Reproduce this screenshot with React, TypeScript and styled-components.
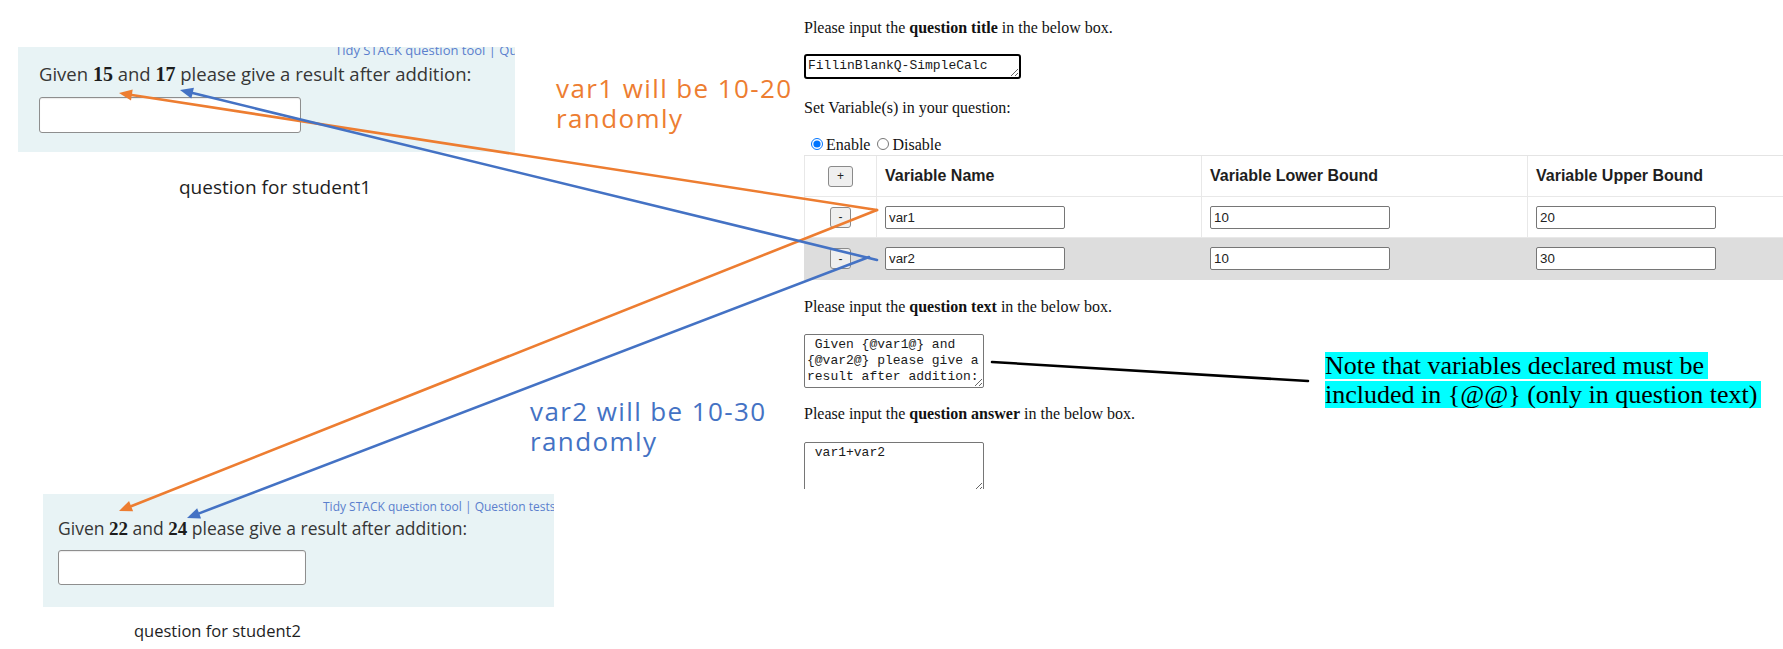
import React from 'react';
import styled, { createGlobalStyle } from 'styled-components';

const GlobalStyle = createGlobalStyle`
  html, body {
    margin: 0;
    padding: 0;
    background: #ffffff;
  }
  body {
    font-family: "Liberation Serif", "Times New Roman", serif;
  }
`;

const ORANGE = '#ed7d31';
const BLUE = '#4472c4';

/* ---------- canvas ---------- */

const Canvas = styled.div`
  position: relative;
  width: 1783px;
  height: 649px;
  overflow: hidden;
  background: #ffffff;
`;

const Overlay = styled.svg`
  position: absolute;
  left: 0;
  top: 0;
  width: 1783px;
  height: 649px;
  pointer-events: none;
`;

/* ---------- student question screenshots ---------- */

const Figure = styled.figure<{ $left: number; $top: number }>`
  position: absolute;
  left: ${(p) => p.$left}px;
  top: ${(p) => p.$top}px;
  margin: 0;
  display: flex;
  flex-direction: column;
  font-family: "Open Sans", "Noto Sans", sans-serif;
`;

const QuestionPanel = styled.div<{ $w: number; $h: number; $pad: number }>`
  box-sizing: border-box;
  width: ${(p) => p.$w}px;
  height: ${(p) => p.$h}px;
  padding-left: ${(p) => p.$pad}px;
  background: #e8f3f5;
  overflow: hidden;
  display: flex;
  flex-direction: column;
  align-items: flex-start;
`;

const ToolLinks = styled.div<{ $indent: number; $size: number; $shift: number }>`
  margin-top: ${(p) => p.$shift}px;
  padding-left: ${(p) => p.$indent}px;
  white-space: nowrap;
  font-size: ${(p) => p.$size}px;
  line-height: ${(p) => p.$size + 3}px;
  color: #5b7fcd;
`;

const Prompt = styled.div<{ $size: number; $gap: number }>`
  margin-top: ${(p) => p.$gap}px;
  font-size: ${(p) => p.$size}px;
  line-height: ${(p) => Math.round(p.$size + 6)}px;
  color: #363636;
  white-space: nowrap;
`;

const MathNum = styled.span<{ $size: number }>`
  font-family: "Liberation Serif", "DejaVu Serif", serif;
  font-size: ${(p) => p.$size}px;
  line-height: 1;
  color: #1c1c1c;
  font-weight: 600;
`;

const AnswerField = styled.div<{ $w: number; $h: number; $gap: number }>`
  box-sizing: border-box;
  margin-top: ${(p) => p.$gap}px;
  width: ${(p) => p.$w}px;
  height: ${(p) => p.$h}px;
  background: #ffffff;
  border: 1px solid #8e8e8e;
  border-radius: 3px;
  box-shadow: inset 0 1px 1px rgba(0, 0, 0, 0.08);
`;

const Caption = styled.figcaption<{ $indent: number; $gap: number; $size: number }>`
  margin-top: ${(p) => p.$gap}px;
  padding-left: ${(p) => p.$indent}px;
  font-size: ${(p) => p.$size}px;
  line-height: ${(p) => Math.round(p.$size + 5)}px;
  color: #1e1e1e;
`;

/* ---------- annotation callouts ---------- */

const Callout = styled.div<{ $left: number; $top: number; $color: string }>`
  position: absolute;
  left: ${(p) => p.$left}px;
  top: ${(p) => p.$top}px;
  font-family: "Open Sans", "Noto Sans", sans-serif;
  font-size: 26px;
  line-height: 30px;
  letter-spacing: 1.4px;
  color: ${(p) => p.$color};
  white-space: nowrap;
`;

const Note = styled.div`
  position: absolute;
  left: 1325px;
  top: 352px;
  display: flex;
  flex-direction: column;
  gap: 2px;
  font-family: "Liberation Serif", "Times New Roman", serif;
  font-size: 26px;
  color: #000000;
`;

const NoteLine = styled.span`
  width: fit-content;
  height: 27px;
  line-height: 27px;
  padding-right: 4px;
  background: #00ffff;
  white-space: nowrap;
`;

/* ---------- question authoring form screenshot ---------- */

const FormShot = styled.section`
  position: absolute;
  left: 804px;
  top: 0;
  width: 979px;
  height: 489px;
  overflow: hidden;
  display: flex;
  flex-direction: column;
  align-items: flex-start;
  font-family: "Liberation Serif", "Times New Roman", serif;
  font-size: 16px;
  color: #111111;
`;

const Para = styled.p<{ $gap: number }>`
  margin: ${(p) => p.$gap}px 0 0;
  line-height: 18px;
  white-space: nowrap;
`;

const CodeBox = styled.textarea<{ $w: number; $h: number; $gap: number; $focused?: boolean }>`
  box-sizing: border-box;
  flex: none;
  margin: ${(p) => p.$gap}px 0 0;
  width: ${(p) => p.$w}px;
  height: ${(p) => p.$h}px;
  padding: 2px;
  border: ${(p) => (p.$focused ? '2px solid #000000' : '1px solid #767676')};
  border-radius: ${(p) => (p.$focused ? 3 : 2)}px;
  font-family: "Liberation Mono", "DejaVu Sans Mono", monospace;
  font-size: 13px;
  line-height: 16px;
  color: #1a1a1a;
  background: #ffffff;
  overflow: hidden;
  resize: both;
  outline: none;
`;

const RadioRow = styled.div`
  margin-top: 18px;
  line-height: 18px;
  white-space: nowrap;
`;

const Radio = styled.input`
  margin: 3px 3px 0 7px;
  width: 12px;
  height: 12px;
`;

const VarTable = styled.div`
  margin-top: 1px;
  width: 1049px;
  border-top: 1px solid #e4e4e4;
  display: flex;
  flex-direction: column;
`;

const VarRow = styled.div<{ $shaded?: boolean; $h: number }>`
  box-sizing: border-box;
  display: grid;
  grid-template-columns: 72px 325px 326px 326px;
  height: ${(p) => p.$h}px;
  background: ${(p) => (p.$shaded ? '#dddddd' : '#ffffff')};
  border-bottom: 1px solid ${(p) => (p.$shaded ? '#dddddd' : '#e8e8e8')};
  border-left: 1px solid ${(p) => (p.$shaded ? '#dddddd' : '#e8e8e8')};
`;

const VarCell = styled.div<{ $center?: boolean; $shaded?: boolean }>`
  box-sizing: border-box;
  display: flex;
  align-items: center;
  justify-content: ${(p) => (p.$center ? 'center' : 'flex-start')};
  padding-left: ${(p) => (p.$center ? 0 : 8)}px;
  border-right: 1px solid ${(p) => (p.$shaded ? '#dddddd' : '#e8e8e8')};
`;

const HeadText = styled.span`
  font-family: "Liberation Sans", Arial, sans-serif;
  font-weight: 700;
  font-size: 16px;
  color: #1e1e1e;
`;

const RowButton = styled.button<{ $w: number }>`
  box-sizing: border-box;
  width: ${(p) => p.$w}px;
  height: 21px;
  padding: 0;
  background: #efefef;
  border: 1px solid #8a8a8a;
  border-radius: 3px;
  font-family: "Liberation Sans", Arial, sans-serif;
  font-size: 12px;
  color: #222222;
`;

const VarInput = styled.input`
  box-sizing: border-box;
  width: 180px;
  height: 23px;
  padding: 1px 3px;
  border: 1px solid #767676;
  border-radius: 2px;
  background: #ffffff;
  font-family: "Liberation Sans", Arial, sans-serif;
  font-size: 13.3px;
  color: #222222;
  outline: none;
`;

/* ---------- arrows ---------- */

type Pt = [number, number];

const Arrow: React.FC<{ from: Pt; to: Pt; color: string; head?: boolean }> = ({
  from,
  to,
  color,
  head = true,
}) => {
  const [x1, y1] = from;
  const [x2, y2] = to;
  const a = Math.atan2(y2 - y1, x2 - x1);
  const len = head ? 13 : 0;
  const half = 5.5;
  const bx = x2 - len * Math.cos(a);
  const by = y2 - len * Math.sin(a);
  const nx = -Math.sin(a) * half;
  const ny = Math.cos(a) * half;
  return (
    <g>
      <line x1={x1} y1={y1} x2={bx} y2={by} stroke={color} strokeWidth={2.6} strokeLinecap="round" />
      {head && (
        <polygon
          points={`${x2},${y2} ${bx + nx},${by + ny} ${bx - nx},${by - ny}`}
          fill={color}
        />
      )}
    </g>
  );
};

const variables = [
  { name: 'var1', lower: '10', upper: '20' },
  { name: 'var2', lower: '10', upper: '30' },
];

export default function App() {
  return (
    <>
      <GlobalStyle />
      <Canvas>
        <Figure $left={18} $top={47}>
          <QuestionPanel $w={497} $h={105} $pad={21}>
            <ToolLinks $indent={296} $size={13} $shift={-5}>
              Tidy STACK question tool | Question tests
            </ToolLinks>
            <Prompt $size={18.5} $gap={3}>
              Given <MathNum $size={20}>15</MathNum> and <MathNum $size={20}>17</MathNum> please give a
              result after addition:
            </Prompt>
            <AnswerField $w={262} $h={36} $gap={11} />
          </QuestionPanel>
          <Caption $indent={161} $gap={23} $size={19}>
            question for student1
          </Caption>
        </Figure>

        <Figure $left={43} $top={494}>
          <QuestionPanel $w={511} $h={113} $pad={15}>
            <ToolLinks $indent={265} $size={12} $shift={5}>
              Tidy STACK question tool | Question tests
            </ToolLinks>
            <Prompt $size={17.5} $gap={2}>
              Given <MathNum $size={19}>22</MathNum> and <MathNum $size={19}>24</MathNum> please give a
              result after addition:
            </Prompt>
            <AnswerField $w={248} $h={35} $gap={10} />
          </QuestionPanel>
          <Caption $indent={91} $gap={13} $size={16.5}>
            question for student2
          </Caption>
        </Figure>

        <Callout $left={556} $top={73} $color={ORANGE}>
          var1 will be 10-20
          <br />
          randomly
        </Callout>
        <Callout $left={530} $top={396} $color={BLUE}>
          var2 will be 10-30
          <br />
          randomly
        </Callout>

        <FormShot>
          <Para $gap={19}>
            Please input the <b>question title</b> in the below box.
          </Para>
          <CodeBox $w={217} $h={25} $gap={17} $focused readOnly defaultValue="FillinBlankQ-SimpleCalc" />
          <Para $gap={20}>Set Variable(s) in your question:</Para>
          <RadioRow>
            <Radio type="radio" name="vars" defaultChecked />
            Enable
            <Radio type="radio" name="vars" />
            Disable
          </RadioRow>
          <VarTable>
            <VarRow $h={41}>
              <VarCell $center>
                <RowButton $w={25}>+</RowButton>
              </VarCell>
              <VarCell>
                <HeadText>Variable Name</HeadText>
              </VarCell>
              <VarCell>
                <HeadText>Variable Lower Bound</HeadText>
              </VarCell>
              <VarCell>
                <HeadText>Variable Upper Bound</HeadText>
              </VarCell>
            </VarRow>
            {variables.map((v, i) => {
              const shaded = i % 2 === 1;
              return (
                <VarRow key={v.name} $shaded={shaded} $h={i === 0 ? 41 : 42}>
                  <VarCell $center $shaded={shaded}>
                    <RowButton $w={21}>-</RowButton>
                  </VarCell>
                  <VarCell $shaded={shaded}>
                    <VarInput readOnly defaultValue={v.name} />
                  </VarCell>
                  <VarCell $shaded={shaded}>
                    <VarInput readOnly defaultValue={v.lower} />
                  </VarCell>
                  <VarCell $shaded={shaded}>
                    <VarInput readOnly defaultValue={v.upper} />
                  </VarCell>
                </VarRow>
              );
            })}
          </VarTable>
          <Para $gap={18}>
            Please input the <b>question text</b> in the below box.
          </Para>
          <CodeBox
            $w={180}
            $h={54}
            $gap={18}
            readOnly
            defaultValue=" Given {@var1@} and {@var2@} please give a result after addition:"
          />
          <Para $gap={17}>
            Please input the <b>question answer</b> in the below box.
          </Para>
          <CodeBox $w={180} $h={50} $gap={19} readOnly defaultValue=" var1+var2" />
        </FormShot>

        <Note>
          <NoteLine>Note that variables declared must be</NoteLine>
          <NoteLine>included in {'{@@}'} (only in question text)</NoteLine>
        </Note>

        <Overlay viewBox="0 0 1783 649">
          <Arrow from={[877, 210]} to={[119, 93]} color={ORANGE} />
          <Arrow from={[877, 210]} to={[119, 511]} color={ORANGE} />
          <Arrow from={[877, 260]} to={[180, 90]} color={BLUE} />
          <Arrow from={[869, 257]} to={[187, 518]} color={BLUE} />
          <Arrow from={[992, 362]} to={[1308, 381]} color="#000000" head={false} />
        </Overlay>
      </Canvas>
    </>
  );
}
